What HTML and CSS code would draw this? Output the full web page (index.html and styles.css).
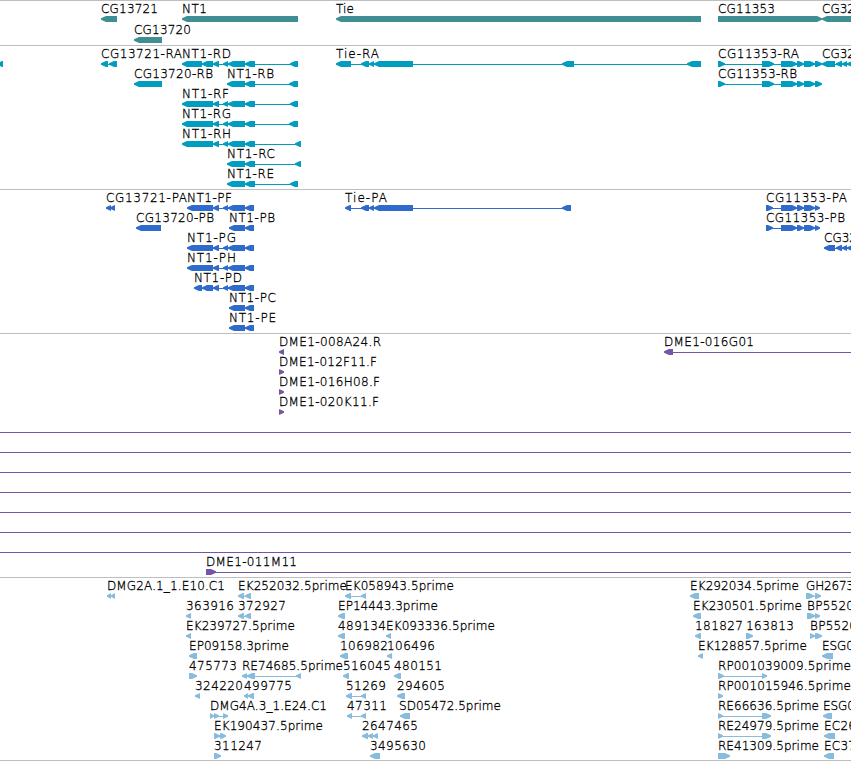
FILE: index.html
```
<!DOCTYPE html>
<html lang="en">
<head>
<meta charset="utf-8">
<title>Genome tracks</title>
<link rel="stylesheet" href="styles.css">
</head>
<body>
<main class="browser">
  <section class="track track-gene"><svg id="gene"></svg></section>
  <section class="track track-rna"><svg id="rna"></svg></section>
  <section class="track track-protein"><svg id="protein"></svg></section>
  <section class="track track-bac"><svg id="bac"></svg></section>
  <section class="track track-est"><svg id="est"></svg></section>
</main>
<script src="tracks.js"></script>
</body>
</html>
```
FILE: styles.css
```
body {
  margin: 0;
  background: #fff;
  overflow: hidden;
}

.browser {
  display: flex;
  flex-direction: column;
  width: 851px;
  border-bottom: 1px solid #bebebe;
}

.track {
  box-sizing: border-box;
  border-top: 1px solid #bebebe;
  overflow: hidden;
}

.track svg {
  display: block;
  width: 100%;
  height: 100%;
}

.track text {
  fill: #000;
  stroke: #000;
  stroke-width: 0.3px;
  font-family: "DejaVu Sans", sans-serif;
  font-size: 12px;
  font-weight: 200;
}

.track-gene { height: 45px; color: #3e8e94; }
.track-rna { height: 144px; color: #009dbf; }
.track-protein { height: 144px; color: #2f6bcd; }
.track-bac { height: 244px; color: #7455a8; }
.track-est { height: 183px; color: #88bcdf; }

.exon,
.intron {
  fill: currentColor;
}

.intron {
  shape-rendering: crispEdges;
}
```
FILE: tracks.js
```
// Each feature: [row, label, label start, label end, strand, exons, line end (optional)]
const nt1 = [[213,219],[223,228],[228,245],[245,255]];
const nt1p = [[213,219],[223,228],[228,245],[245,254]];
const cg11353 = [[718,725],[762,774],[781,797],[797,804],[804,815],[815,822]];
const cg11353p = [[766,773],[781,797],[797,804],[804,815],[815,820]];

const tracks = {
  gene: { pitch: 21, items: [
    [0,'CG13721',101,158,'-',[[101,117]]],
    [0,'NT1',182,207,'-',[[182,298]]],
    [0,'Tie',336,354,'-',[[336,701]]],
    [0,'CG11353',718,775,'+',[[718,822]]],
    [0,'CG32',822,855,'-',[[822,870]]],
    [1,'CG13720',134,191,'-',[[134,162]]]
  ]},
  rna: { pitch: 20, items: [
    [0,'',0,0,'-',[[-3,3]]],
    [0,'CG13721-RA',101,182,'-',[[101,108],[109,117]]],
    [0,'NT1-RD',182,231,'-',[[182,202],[202,213],...nt1,[290,298]]],
    [0,'Tie-RA',336,379,'-',[[336,351],[361,369],[369,374],[374,413],[562,574],[687,701]]],
    [0,'CG11353-RA',718,799,'+',cg11353],
    [0,'CG32',822,855,'-',[[822,835],[836,842],[842,847],[847,854]]],
    [1,'CG13720-RB',134,213,'-',[[134,162]]],
    [1,'NT1-RB',227,274,'-',[[227,245],[245,255],[289,298]]],
    [1,'CG11353-RB',718,797,'+',cg11353],
    [2,'NT1-RF',182,229,'-',[[182,213],...nt1,[290,298]]],
    [3,'NT1-RG',182,231,'-',[[182,213],...nt1,[289,298]]],
    [4,'NT1-RH',182,231,'-',[[182,213],...nt1,[295,301]]],
    [5,'NT1-RC',227,275,'-',[[227,245],[245,255],[295,301]]],
    [6,'NT1-RE',227,274,'-',[[227,245],[245,255],[290,298]]]
  ]},
  protein: { pitch: 20, items: [
    [0,'CG13721-PA',106,187,'-',[[106,111],[110,115]]],
    [0,'NT1-PF',187,232,'-',[[187,213],...nt1p]],
    [0,'Tie-PA',345,387,'-',[[345,351],[361,369],[369,374],[374,413],[562,571]]],
    [0,'CG11353-PA',766,847,'+',cg11353p],
    [1,'CG13720-PB',136,214,'-',[[136,161]]],
    [1,'NT1-PB',229,275,'-',[[229,245],[245,254]]],
    [1,'CG11353-PB',766,845,'+',cg11353p],
    [2,'NT1-PG',187,236,'-',[[187,213],...nt1p]],
    [2,'CG32',824,857,'-',[[824,835],[836,842],[842,847],[847,854]]],
    [3,'NT1-PH',187,236,'-',[[187,213],...nt1p]],
    [4,'NT1-PD',194,242,'-',[[194,202],[202,213],...nt1p]],
    [5,'NT1-PC',229,276,'-',[[229,245],[245,254]]],
    [6,'NT1-PE',229,276,'-',[[229,245],[245,254]]]
  ]},
  bac: { pitch: 20, items: [
    [0,'DME1-008A24.R',279,381,'-',[[279,284]]],
    [0,'DME1-016G01',664,754,'-',[[664,673]],851],
    [1,'DME1-012F11.F',279,377,'+',[[279,284]]],
    [2,'DME1-016H08.F',279,380,'+',[[279,284]]],
    [3,'DME1-020K11.F',279,379,'+',[[279,284]]],
    ...[4,5,6,7,8,9,10].map(row => [row,'',0,0,'+',[],851]),
    [11,'DME1-011M11',206,297,'+',[[206,216]],851]
  ]},
  est: { pitch: 20, items: [
    [0,'DMG2A.1_1.E10.C1',107,225,'-',[[107,111],[111,115]]],
    [0,'EK252032.5prime',238,347,'-',[[238,244],[245,251]]],
    [0,'EK058943.5prime',345,454,'-',[[345,351],[361,366]]],
    [0,'EK292034.5prime',690,799,'-',[[690,699]]],
    [0,'GH2673',806,854,'+',[[806,814],[815,821]]],
    [1,'363916',186,234,'-',[[186,191]]],
    [1,'372927',238,286,'-',[[238,244],[245,251]]],
    [1,'EP14443.3prime',338,438,'-',[[338,345]]],
    [1,'EK230501.5prime',693,802,'-',[[693,701]]],
    [1,'BP5520',807,854,'+',[[807,815],[815,820]]],
    [2,'EK239727.5prime',186,295,'-',[[186,191]]],
    [2,'489134',338,386,'-',[[338,345]]],
    [2,'EK093336.5prime',386,495,'-',[[386,391]]],
    [2,'181827',695,743,'-',[[695,701]]],
    [2,'163813',746,794,'+',[[746,753]]],
    [2,'BP5520',810,857,'+',[[810,815],[815,822]]],
    [3,'EP09158.3prime',189,289,'-',[[189,197]]],
    [3,'106982',340,388,'-',[[340,348]]],
    [3,'106496',387,435,'-',[[387,392]]],
    [3,'EK128857.5prime',698,807,'-',[[698,703]]],
    [3,'ESG0',822,854,'-',[[822,833]]],
    [4,'475773',189,237,'+',[[189,197]]],
    [4,'RE74685.5prime',242,343,'-',[[242,247],[247,255],[296,301]]],
    [4,'516045',343,391,'-',[[343,349]]],
    [4,'480151',394,442,'-',[[394,401]]],
    [4,'RP001039009.5prime',718,851,'+',[[718,724],[762,767]]],
    [5,'324220',195,243,'-',[[195,200]]],
    [5,'499775',244,292,'-',[[244,248],[248,254]]],
    [5,'51269',346,386,'-',[[346,352],[361,366]]],
    [5,'294605',397,445,'-',[[397,405]]],
    [5,'RP001015946.5prime',718,851,'+',[[718,723]]],
    [6,'DMG4A.3_1.E24.C1',210,327,'+',[[210,214],[214,219],[223,228]]],
    [6,'47311',347,387,'-',[[347,352],[361,366]]],
    [6,'SD05472.5prime',399,501,'-',[[400,410]]],
    [6,'RE66636.5prime',718,819,'+',[[718,723],[762,771]]],
    [6,'ESG0',823,855,'-',[[823,832]]],
    [7,'EK190437.5prime',214,323,'+',[[214,220],[220,226]]],
    [7,'2647465',362,418,'-',[[362,368],[368,373],[373,378]]],
    [7,'RE24979.5prime',718,819,'+',[[718,723],[762,771]]],
    [7,'EC26',824,856,'-',[[824,835]]],
    [8,'311247',214,262,'+',[[214,221]]],
    [8,'3495630',370,426,'-',[[370,380]]],
    [8,'RE41309.5prime',718,819,'+',[[718,730]]],
    [8,'EC37',824,856,'-',[[824,834]]]
  ]}
};

const NS = 'http://www.w3.org/2000/svg';

function add(parent, tag, attrs, text) {
  const el = document.createElementNS(NS, tag);
  for (const key in attrs) el.setAttribute(key, attrs[key]);
  if (text) el.textContent = text;
  parent.appendChild(el);
}

// Block with a tapered head pointing along the strand
function exonPoints(start, end, strand, top) {
  const head = Math.min(5, end - start);
  const tip = strand === '-' ? start : end;
  const neck = strand === '-' ? start + head : end - head;
  const tail = strand === '-' ? end : start;
  return [[tail, top], [neck, top], [tip, top + 2.3], [tip, top + 3.7],
    [neck, top + 6], [tail, top + 6]].map(p => p.join(',')).join(' ');
}

for (const id in tracks) {
  const svg = document.getElementById(id);
  const { pitch, items } = tracks[id];
  for (const [row, label, x1, x2, strand, exons, lineEnd] of items) {
    const top = row * pitch + 15;
    const from = exons.length ? exons[0][0] + 1 : 0;
    const to = lineEnd || exons[exons.length - 1][1] - 1;
    if (lineEnd || exons.length > 1) {
      add(svg, 'rect', { class: 'intron', x: from, y: top + 3, width: to - from, height: 1 });
    }
    for (const [a, b] of exons) {
      add(svg, 'polygon', { class: 'exon', points: exonPoints(a, b, strand, top) });
    }
    if (label) {
      add(svg, 'text', { x: x1, y: row * pitch + 12, textLength: x2 - x1 }, label);
    }
  }
}
```
